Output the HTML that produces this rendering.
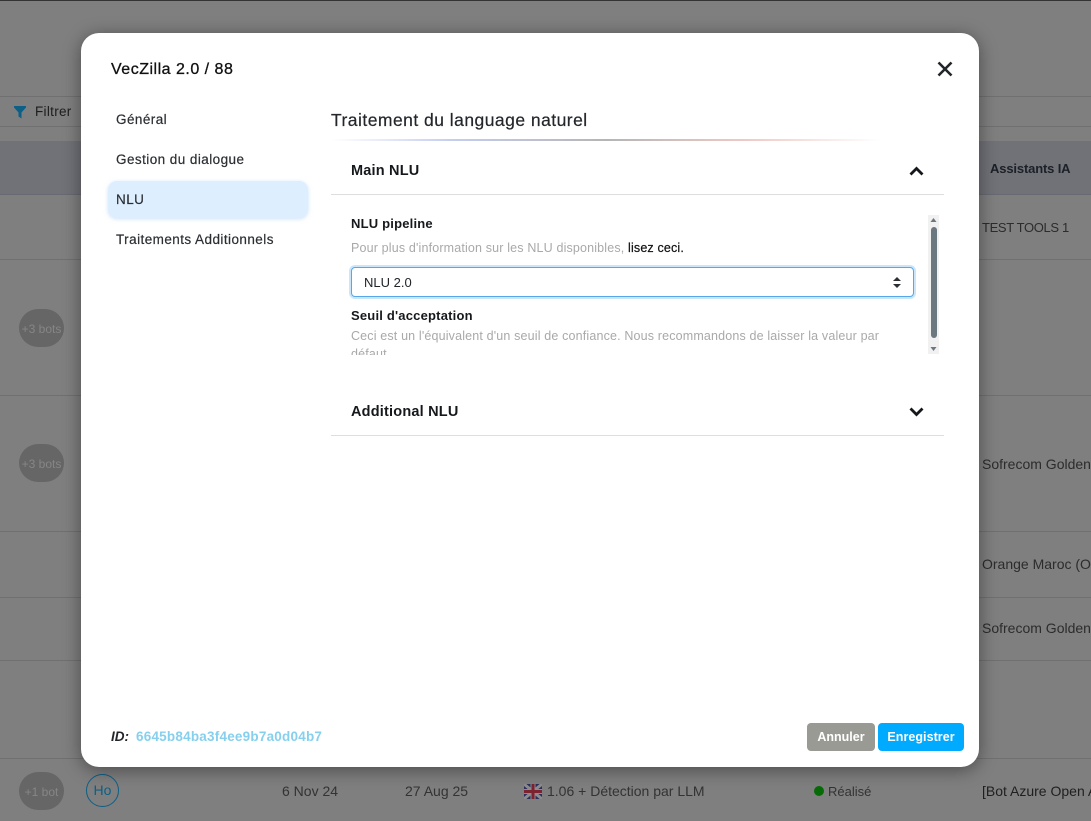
<!DOCTYPE html>
<html lang="fr">
<head>
<meta charset="utf-8">
<title>VecZilla</title>
<style>
html,body{margin:0;padding:0;width:1091px;height:821px;overflow:hidden;background:#7f7f7f;font-family:"Liberation Sans","Noto Sans CJK SC",sans-serif;}
.t{position:absolute;white-space:nowrap;line-height:18px;}
.line{position:absolute;height:1px;}
.bg{color:#2c2c2c;font-size:14px;}
.pill{position:absolute;left:19px;width:45px;height:38px;border-radius:19px;background:#666;color:#868686;font-size:12px;text-align:center;line-height:40px;white-space:nowrap;}
#modal{position:absolute;left:81px;top:33px;width:898px;height:734px;background:#fff;border-radius:18px;box-shadow:0 3px 18px rgba(0,0,0,.42);}
.m{position:absolute;white-space:nowrap;line-height:18px;}
.nav{font-size:13.500px;color:#2b2f33;font-weight:400;letter-spacing:.44px;-webkit-text-stroke:.2px #2b2f33;}
.hr{position:absolute;height:1px;background:#dedede;}
.lab{font-size:13px;font-weight:700;color:#16191c;letter-spacing:.2px;}
.hint{font-size:12.500px;color:#a9a9a9;letter-spacing:.16px;}
</style>
</head>
<body>
<div style="position:absolute;left:0;top:0;width:1091px;height:1px;background:#333"></div>
<div style="position:absolute;left:0;top:141px;width:1091px;height:53px;background:#707278"></div>
<div class="line" style="left:0;top:96px;width:1091px;background:#707070"></div>
<div class="line" style="left:0;top:126px;width:1091px;background:#707070"></div>
<div class="line" style="left:0;top:194px;width:1091px;background:#676a72"></div>
<div class="line" style="left:0;top:259px;width:1091px;background:#707070"></div>
<div class="line" style="left:0;top:395px;width:1091px;background:#707070"></div>
<div class="line" style="left:0;top:531px;width:1091px;background:#707070"></div>
<div class="line" style="left:0;top:597px;width:1091px;background:#707070"></div>
<div class="line" style="left:0;top:660px;width:1091px;background:#707070"></div>
<div class="line" style="left:0;top:758px;width:1091px;background:#707070"></div>

<svg style="position:absolute;left:14px;top:106px" width="12" height="13" viewBox="0 0 12 13"><path d="M0 0H12V1.500L7.500 6.500V12.500L4.500 10.500V6.500L0 1.500Z" fill="#0d5f86"/></svg>
<div class="t bg" style="left:35px;top:103px;color:#1c1c1c;font-size:13.500px;letter-spacing:.3px">Filtrer</div>
<div class="t" style="left:990px;top:160px;font-size:13px;font-weight:700;color:#1c2027;letter-spacing:-.15px">Assistants IA</div>
<div class="t bg" style="left:982px;top:219px;font-size:13px;letter-spacing:-.35px">TEST TOOLS 1</div>
<div class="t bg" style="left:982px;top:455px">Sofrecom Golden</div>
<div class="t bg" style="left:982px;top:555px">Orange Maroc (O</div>
<div class="t bg" style="left:982px;top:619px">Sofrecom Golden</div>
<div class="t bg" style="left:982px;top:782px;color:#1f1f1f">[Bot Azure Open A</div>
<div class="pill" style="top:309px">+3 bots</div>
<div class="pill" style="top:444px">+3 bots</div>
<div class="pill" style="top:772px">+1 bot</div>
<div style="position:absolute;left:86px;top:774px;width:31px;height:31px;border:1px solid #0d5f86;border-radius:50%;color:#0d5f86;font-size:14px;line-height:31px;text-align:center">Ho</div>
<div class="t bg" style="left:282px;top:782px;color:#333">6 Nov 24</div>
<div class="t bg" style="left:405px;top:782px;color:#333">27 Aug 25</div>
<svg style="position:absolute;left:524px;top:784px" width="18" height="15" viewBox="0 0 18 15"><rect width="18" height="15" fill="#2b2f5c"/><path d="M0 0L18 15M18 0L0 15" stroke="#8c8c8c" stroke-width="3"/><path d="M9 0V15M0 7.500H18" stroke="#8c8c8c" stroke-width="5"/><path d="M9 0V15M0 7.500H18" stroke="#7c2230" stroke-width="3"/></svg>
<div class="t bg" style="left:547px;top:782px;color:#333">1.06 + Détection par LLM</div>
<div style="position:absolute;left:814px;top:786px;width:10px;height:10px;border-radius:50%;background:#066b06"></div>
<div class="t bg" style="left:828px;top:783px;font-size:13px;color:#333">Réalisé</div>

<div id="modal">
  <div class="m" style="left:30px;top:28px;font-size:16px;font-weight:400;color:#111;-webkit-text-stroke:.3px #111;letter-spacing:.5px">VecZilla 2.0 / 88</div>
  <svg style="position:absolute;left:856px;top:28px" width="16" height="16" viewBox="0 0 16 16"><path d="M1.500 1.500L14.500 14.500M14.500 1.500L1.500 14.500" stroke="#22262a" stroke-width="2.600" fill="none"/></svg>

  <div style="position:absolute;left:27px;top:148px;width:200px;height:37px;background:#ddeeff;border-radius:9px;box-shadow:0 1px 4px rgba(170,205,245,.6)"></div>
  <div class="m nav" style="left:35px;top:78px">Général</div>
  <div class="m nav" style="left:35px;top:118px">Gestion du dialogue</div>
  <div class="m nav" style="left:35px;top:158px">NLU</div>
  <div class="m nav" style="left:35px;top:198px">Traitements Additionnels</div>

  <div class="m" style="left:250px;top:78px;font-size:17.500px;color:#23272b;-webkit-text-stroke:.2px #23272b;letter-spacing:.47px">Traitement du language naturel</div>
  <div style="position:absolute;left:250px;top:106px;width:550px;height:2px;background:linear-gradient(90deg,#fff 0%,#c5cdf0 22%,#b5b5b5 50%,#eec9c4 75%,#fff 100%)"></div>

  <div class="m" style="left:270px;top:129px;font-size:14.500px;font-weight:700;color:#16191c;letter-spacing:.2px">Main NLU</div>
  <svg style="position:absolute;left:828px;top:133px" width="15" height="10" viewBox="0 0 15 10"><path d="M1.500 8.500L7.500 2.500L13.500 8.500" stroke="#14181c" stroke-width="2.800" fill="none"/></svg>
  <div class="hr" style="left:250px;top:161px;width:613px"></div>

  <div style="position:absolute;left:250px;top:182px;width:597px;height:140px;overflow:hidden">
    <div class="m lab" style="left:20px;top:0">NLU pipeline</div>
    <div class="m hint" style="left:20px;top:24px">Pour plus d'information sur les NLU disponibles, <span style="color:#111;-webkit-text-stroke:.2px #111">lisez ceci.</span></div>
    <div style="position:absolute;left:20px;top:52px;width:561px;height:28px;border:1px solid #56a8e8;border-radius:4px;box-shadow:0 0 0 2px #cbe6fb;background:#fff"></div>
    <div class="m" style="left:33px;top:59px;font-size:13px;color:#212529">NLU 2.0</div>
    <svg style="position:absolute;left:561px;top:61px" width="10" height="13" viewBox="0 0 10 13"><path d="M5 1L9 5H1Z M5 12L1 8H9Z" fill="#2c3034"/></svg>
    <div class="m lab" style="left:20px;top:92px">Seuil d'acceptation</div>
    <div class="m hint" style="left:20px;top:112px">Ceci est un l'équivalent d'un seuil de confiance. Nous recommandons de laisser la valeur par</div>
    <div class="m hint" style="left:20px;top:130px">défaut</div>
  </div>
  <div style="position:absolute;left:847px;top:182px;width:11px;height:139px;background:#f1f1f1"></div>
  <div style="position:absolute;left:850px;top:194px;width:6px;height:111px;background:#6b7880;border-radius:3px"></div>
  <svg style="position:absolute;left:847px;top:182px" width="11" height="139" viewBox="0 0 11 139"><path d="M5.500 3L8.500 7H2.500Z M5.500 136L2.500 132H8.500Z" fill="#6b7880"/></svg>

  <div class="m" style="left:270px;top:370px;font-size:14.500px;font-weight:700;color:#16191c;letter-spacing:.2px">Additional NLU</div>
  <svg style="position:absolute;left:828px;top:374px" width="15" height="10" viewBox="0 0 15 10"><path d="M1.500 1.500L7.500 7.500L13.500 1.500" stroke="#14181c" stroke-width="2.800" fill="none"/></svg>
  <div class="hr" style="left:250px;top:402px;width:613px"></div>

  <div class="m" style="left:30px;top:695px;font-size:13.500px;font-weight:700;font-style:italic;color:#22262a">ID:</div>
  <div class="m" style="left:55px;top:695px;font-size:13.500px;font-weight:700;color:#86d0ee;letter-spacing:.22px">6645b84ba3f4ee9b7a0d04b7</div>
  <div style="position:absolute;left:726px;top:690px;width:68px;height:28px;border-radius:4px;background:#9a9a94;color:#fff;font-size:12.500px;font-weight:700;line-height:28px;text-align:center">Annuler</div>
  <div style="position:absolute;left:797px;top:690px;width:86px;height:28px;border-radius:4px;background:#00aaff;color:#fff;font-size:12.500px;font-weight:700;line-height:28px;text-align:center;letter-spacing:.05px">Enregistrer</div>
</div>
</body>
</html>
